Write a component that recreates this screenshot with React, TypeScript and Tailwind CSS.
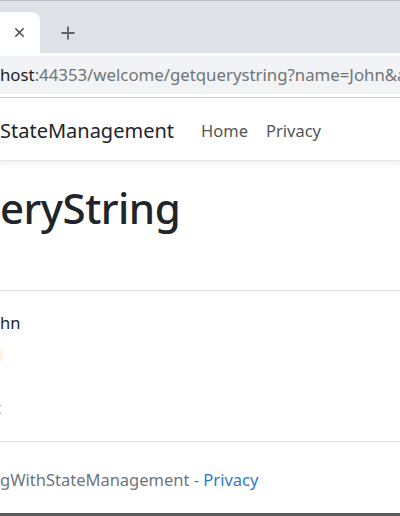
import { X, Plus } from "lucide-react";

const font = { fontFamily: '"Noto Sans", "Open Sans", Arial, sans-serif' };

function TabStrip() {
  return (
    <div className="h-[53px] bg-[#dee1e6] border-t border-[#b9bcc1] flex items-end">
      <div className="w-[40px] h-[41px] bg-white rounded-tr-[8px] flex items-center justify-end pr-[13px]">
        <X className="h-[15px] w-[15px] text-[#3c4043]" strokeWidth={2.2} />
      </div>
      <div className="h-[41px] flex items-center pl-[18px]">
        <Plus className="h-[20px] w-[20px] text-[#5f6368]" strokeWidth={2.2} />
      </div>
    </div>
  );
}

function Toolbar() {
  return (
    <div className="h-[45px] bg-white border-b border-[#c8c8c8] flex items-center">
      <div className="h-[38px] w-full bg-[#f1f3f4] flex items-center overflow-hidden whitespace-nowrap text-[16.8px]">
        <span className="text-[#202124]">host</span>
        <span className="text-[#70757a]">:44353/welcome/getquerystring?name=John&amp;age=25</span>
      </div>
    </div>
  );
}

function Navbar() {
  return (
    <div className="h-[63px] bg-white border-b border-[#e5e5e5] shadow-[0_3px_6px_rgba(0,0,0,0.06)] flex items-center pt-[4px]">
      <span className="text-[20px] text-[#212529] whitespace-nowrap">StateManagement</span>
      <nav className="flex items-center gap-[18px] ml-[27px] text-[16.5px] text-[#555]">
        <span>Home</span>
        <span>Privacy</span>
      </nav>
    </div>
  );
}

export default function App() {
  return (
    <div className="w-[400px] h-[516px] overflow-hidden bg-white flex flex-col" style={font}>
      <TabStrip />
      <Toolbar />
      <Navbar />
      <main className="flex flex-col">
        <h1 className="text-[42px] leading-none tracking-[-0.5px] text-[#212529] mt-[26px] font-medium whitespace-nowrap">
          eryString
        </h1>
        <div className="h-px bg-[#dedede] mt-[61px]" />
        <p className="text-[16.5px] text-[#212529] mt-[20px] leading-[24px]">hn</p>
        <div className="h-[12px] w-[3px] bg-[#fcf6e0] mt-[14px]" />
        <p className="text-[16.5px] text-[#6f7680] leading-[24px] mt-[35px] -ml-[5px]">t</p>
        <div className="h-px bg-[#dedede] mt-[21px]" />
        <footer className="text-[16.5px] text-[#6c757d] mt-[26px] leading-[24px] whitespace-nowrap">
          gWithStateManagement - <span className="text-[#2f78d2]">Privacy</span>
        </footer>
      </main>
      <div className="flex-1" />
      <div className="h-[3px] bg-[#5a5a5a]" />
    </div>
  );
}
